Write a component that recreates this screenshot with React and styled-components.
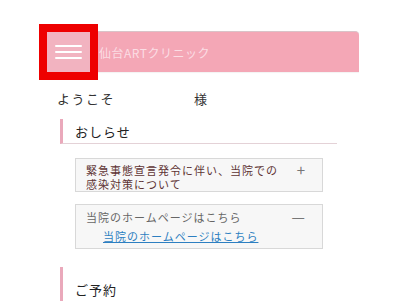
import styled, { createGlobalStyle } from "styled-components"

const GlobalStyle = createGlobalStyle`
    html, body {
        margin: 0;
        padding: 0;
        background: #ffffff;
        font-family: "Noto Sans CJK JP", "Noto Sans", sans-serif;
    }
`

const Page = styled.div`
    width: 312px;
    padding: 31px 0 0 47px;
    height: 270px;
    overflow: hidden;
`

const Header = styled.header`
    display: flex;
    align-items: center;
    height: 40px;
    background: #f4a7b6;
    border-top: 1px solid #d9c3c8;
    border-top-right-radius: 4px;
    box-shadow: 0 1px 1px rgba(0, 0, 0, 0.05);
`

const MenuButton = styled.button`
    width: 43px;
    height: 40px;
    margin: 0;
    padding: 0;
    border: none;
    background: #f2b3c0;
    outline: 8px solid #ee0000;
    display: flex;
    flex-direction: column;
    align-items: center;
    justify-content: center;
    gap: 4px;
    position: relative;
    z-index: 1;
`

const MenuLine = styled.span`
    display: block;
    width: 27px;
    height: 2px;
    background: #ffffff;
    border-radius: 1px;
`

const SiteTitle = styled.h1`
    margin: 0 0 0 9px;
    font-size: 12px;
    font-weight: normal;
    color: #fbdde4;
    letter-spacing: 0.5px;
`

const Welcome = styled.div`
    display: flex;
    margin: 18px 0 0 10px;
    font-size: 13px;
    letter-spacing: 1.5px;
    color: #333;
    line-height: 18px;
`

const WelcomeName = styled.span`
    width: 137px;
`

const SectionTitle = styled.h2`
    margin: ${(props) => props.$top}px 0 0 13px;
    width: 262px;
    height: 24px;
    padding: ${(props) => props.$pad}px 0 0 12px;
    border-left: 3px solid #eaa9bb;
    border-bottom: ${(props) => (props.$line ? "1px solid #e4d2d7" : "none")};
    font-size: 13px;
    letter-spacing: 1px;
    font-weight: normal;
    color: #222;
    display: flex;
    align-items: center;
`

const Card = styled.div`
    margin: ${(props) => props.$top}px 0 0 28px;
    width: 226px;
    padding: ${(props) => props.$pad};
    background: #f7f7f7;
    border: 1px solid #d8d8d8;
`

const CardHead = styled.div`
    display: flex;
    justify-content: space-between;
    align-items: flex-start;
    font-size: 11px;
    letter-spacing: 1px;
    line-height: 14px;
    color: ${(props) => props.$color};
`

const Toggle = styled.span`
    font-size: 15px;
    line-height: 14px;
    color: #777;
    margin-right: 6px;
`

const CardLink = styled.a`
    display: block;
    margin: 5px 0 0 17px;
    font-size: 11px;
    letter-spacing: 1px;
    line-height: 14px;
    color: #2d7fc1;
    text-decoration: underline;
`

export default function App() {
    return (
        <>
            <GlobalStyle />
            <Page>
                <Header>
                    <MenuButton aria-label="menu">
                        <MenuLine />
                        <MenuLine />
                        <MenuLine />
                    </MenuButton>
                    <SiteTitle>仙台ARTクリニック</SiteTitle>
                </Header>
                <Welcome>
                    <WelcomeName>ようこそ</WelcomeName>
                    <span>様</span>
                </Welcome>
                <SectionTitle $top={11} $pad={0} $line>おしらせ</SectionTitle>
                <Card $top={14} $pad="4px 10px 0 10px">
                    <CardHead $color="#5e3434">
                        <span>緊急事態宣言発令に伴い、当院での<br />感染対策について</span>
                        <Toggle>+</Toggle>
                    </CardHead>
                </Card>
                <Card $top={12} $pad="5px 10px 5px 10px">
                    <CardHead $color="#666">
                        <span>当院のホームページはこちら</span>
                        <Toggle>—</Toggle>
                    </CardHead>
                    <CardLink href="#">当院のホームページはこちら</CardLink>
                </Card>
                <SectionTitle $top={18} $pad={10}>ご予約</SectionTitle>
            </Page>
        </>
    )
}
